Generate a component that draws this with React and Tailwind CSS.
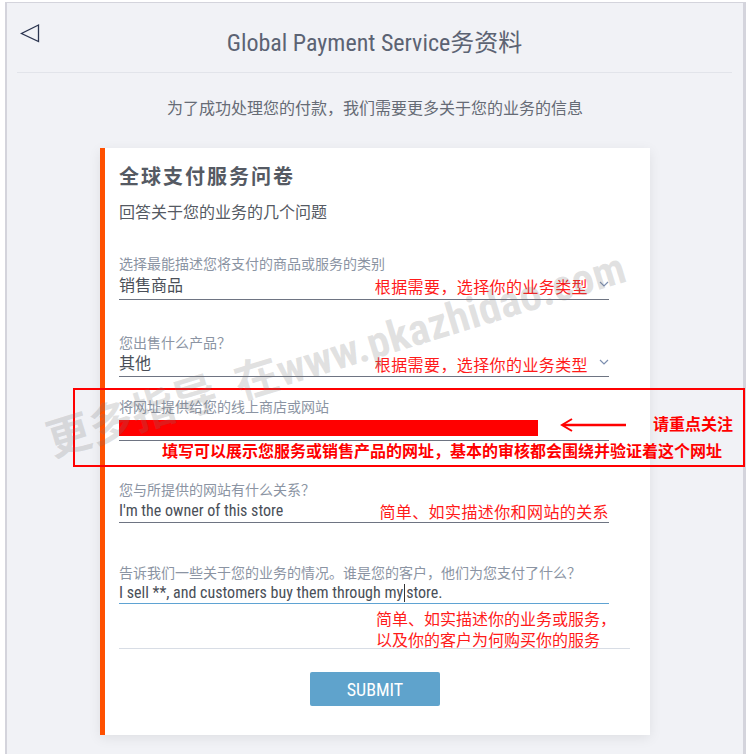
import React from 'react';

const font = "font-['Roboto_Condensed','Liberation_Sans_Narrow','DejaVu_Sans_Condensed',Roboto,'Noto_Sans_CJK_SC',sans-serif]";

const Chevron = () => (
  <svg width="10" height="6" viewBox="0 0 10 6" className="ml-[11px] mt-[-4px]">
    <polyline points="1,1 5,5 9,1" fill="none" stroke="#7d8fb0" strokeWidth="1.2" />
  </svg>
);

// one question of the form: label, value row, underline
const Field = ({ label, value, note, chevron, line = 'border-[#6e7482]', rowH = 'h-[26px]', className = '' }) => (
  <div className={`w-[490px] ${className}`}>
    <div className="text-[14px] leading-[18px] text-[#8b94a3]">{label}</div>
    <div className={`flex items-center border-b ${line} ${rowH}`}>
      <div className="text-[16px] text-[#4a4f58]">{value}</div>
      <div className="flex-1" />
      {note && <div className="text-[16px] tracking-[0.4px] text-[#ff1a1a] mt-[4px]">{note}</div>}
      {chevron && <Chevron />}
    </div>
  </div>
);

export default function App() {
  return (
    <div className={`relative w-[751px] h-[754px] bg-white overflow-hidden ${font}`}>
      <div className="ml-[5px] mt-[2px] w-[741px] h-[752px] border-t border-l-2 border-r-[3px] border-[#d4d4dc] bg-[#f1f2f6]">
        {/* header */}
        <div className="mx-[10px] mr-[11px] h-[70px] border-b border-[#e2e4ea] grid grid-cols-[1fr_auto_1fr] items-center pt-[10px]">
          <svg width="20" height="19" viewBox="0 0 20 19" className="ml-[3px] mt-[-18px]">
            <polygon points="18.5,1 1.5,9.5 18.5,17.5" fill="none" stroke="#2c3550" strokeWidth="1.3" />
          </svg>
          <div className="text-[24px] text-[#5c6373]">Global Payment Service务资料</div>
          <div />
        </div>

        <div className="mt-[24px] text-center text-[16px] leading-[24px] text-[#666b75]">
          为了成功处理您的付款，我们需要更多关于您的业务的信息
        </div>

        {/* card */}
        <div className="relative mx-auto mt-[27px] w-[550px] bg-white border-l-[5px] border-[#ff5000] pl-[14px] pt-[15px] pb-[29px] shadow-[0_3px_12px_rgba(0,0,0,0.08)]">
          <div className="text-[20px] leading-[28px] font-bold tracking-[2px] text-[#555a63]">全球支付服务问卷</div>
          <div className="mt-[10px] text-[16px] leading-[24px] text-[#555a63]">回答关于您的业务的几个问题</div>

          <Field className="mt-[30px]" rowH="h-[27px]" label="选择最能描述您将支付的商品或服务的类别" value="销售商品" note="根据需要，选择你的业务类型" chevron />
          <Field className="mt-[34px]" rowH="h-[25px]" label="您出售什么产品？" value="其他" note="根据需要，选择你的业务类型" chevron />

          <div className="mt-[21px] w-[490px]">
            <div className="text-[14px] leading-[18px] text-[#8b94a3]">将网址提供给您的线上商店或网站</div>
            <div className="h-[25px] border-b border-[#6e7482] pt-[4px]">
              <div className="w-[419px] h-[16px] bg-[#ff0000]" />
            </div>
          </div>

          <Field className="mt-[40px]" rowH="h-[24px]" label="您与所提供的网站有什么关系？" value="I'm the owner of this store" note="简单、如实描述你和网站的关系" />

          <div className="mt-[41px] w-[490px]">
            <div className="text-[14px] leading-[18px] text-[#8b94a3]">告诉我们一些关于您的业务的情况。谁是您的客户，他们为您支付了什么？</div>
            <div className="h-[22px] border-b border-[#5fa3d3] flex items-center">
              <span className="text-[16px] text-[#4a4f58]">I sell **, and customers buy them through my</span>
              <span className="inline-block w-px h-[18px] bg-[#333] mx-[1px]" />
              <span className="text-[16px] text-[#4a4f58]">store.</span>
            </div>
          </div>
          <div className="w-[511px] h-[45px] border-b border-[#d8dde5] pl-[257px] pt-[5px] text-[16px] leading-[21px] text-[#ff1a1a]">
            <div>简单、如实描述你的业务或服务，</div>
            <div>以及你的客户为何购买你的服务</div>
          </div>

          <div className="mt-[23px] ml-[191px] w-[130px] h-[34px] rounded-[2px] bg-[#5fa3cc] flex items-center justify-center text-[18px] text-white">
            SUBMIT
          </div>

          {/* red annotation box */}
          <div className="absolute left-[-32px] top-[240px] w-[672px] h-[79px] border-2 border-[#ff0000]">
            <svg width="66" height="14" viewBox="0 0 66 14" className="absolute left-[485px] top-[28px]">
              <line x1="3" y1="7" x2="66" y2="7" stroke="#ff0000" strokeWidth="2.5" />
              <polyline points="12,1 2,7 12,13" fill="none" stroke="#ff0000" strokeWidth="2" />
            </svg>
            <div className="absolute left-[578px] top-[24px] text-[16px] leading-[22px] font-bold text-[#ff0000]">请重点关注</div>
            <div className="absolute left-[87px] top-[51px] text-[16px] leading-[22px] font-bold text-[#ff0000] whitespace-nowrap">
              填写可以展示您服务或销售产品的网址，基本的审核都会围绕并验证着这个网址
            </div>
          </div>
        </div>
      </div>

      {/* watermark */}
      <div className="absolute left-[35px] top-[322px] w-[600px] text-center whitespace-nowrap rotate-[-17deg] text-[44px] font-bold text-[rgba(120,120,120,0.22)] pointer-events-none">
        更多指导&nbsp;&nbsp;在www.pkazhidao.com
      </div>
    </div>
  );
}
